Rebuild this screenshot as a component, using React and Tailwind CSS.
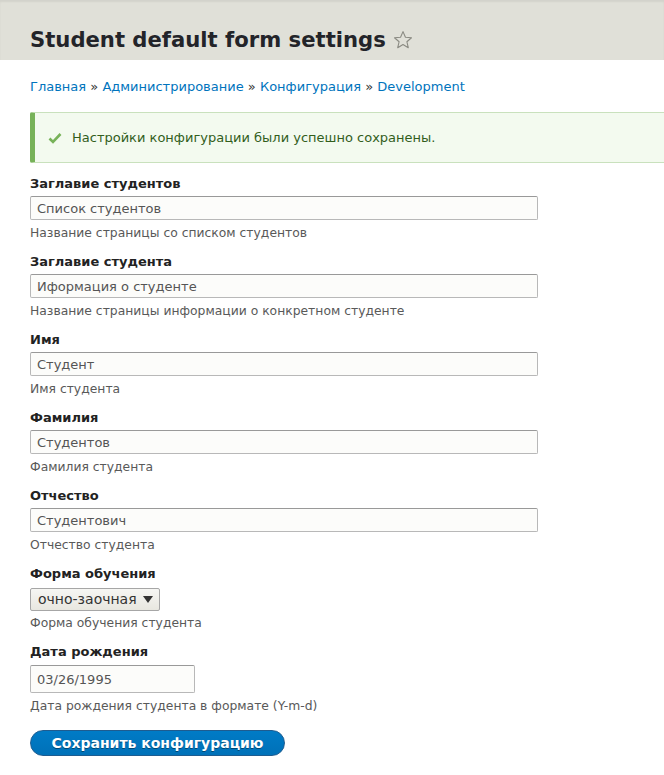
import React from "react";

const fields = [
  { label: "Заглавие студентов", value: "Список студентов", desc: "Название страницы со списком студентов" },
  { label: "Заглавие студента", value: "Иформация о студенте", desc: "Название страницы информации о конкретном студенте" },
  { label: "Имя", value: "Студент", desc: "Имя студента" },
  { label: "Фамилия", value: "Студентов", desc: "Фамилия студента" },
  { label: "Отчество", value: "Студентович", desc: "Отчество студента" },
];

const Star = () => (
  <svg width="20" height="20" viewBox="0 0 20 20" className="ml-[7px] shrink-0">
    <path
      d="M10 1.6l2.45 5.6 6.05.55-4.6 4 1.38 5.95L10 14.55 4.72 17.7 6.1 11.75l-4.6-4 6.05-.55z"
      fill="none"
      stroke="#8a8a82"
      strokeWidth="1.1"
      strokeLinejoin="round"
    />
  </svg>
);

const Check = () => (
  <svg width="14" height="12" viewBox="0 0 14 12" className="shrink-0">
    <path d="M1.5 6.5l3.5 3.5 7.5-8" fill="none" stroke="#77b259" strokeWidth="2.6" />
  </svg>
);

export default function App() {
  return (
    <div className="w-full min-h-[775px] bg-white overflow-hidden text-[#222] font-['DejaVu_Sans',sans-serif]">
      <div className="h-[60px] bg-[#e0e0d8] px-[30px] pt-[27px] shadow-[inset_0_2px_2px_rgba(0,0,0,0.06)]">
        <h1 className="flex items-center text-[21.15px] leading-[26px] font-bold text-[#232429]">
          <span>Student default form settings</span>
          <Star />
        </h1>
      </div>

      <div className="px-[30px]">
        <nav className="mt-[17px] text-[13px] leading-[20px] text-[#333]">
          <a className="text-[#0074bd]">Главная</a> » <a className="text-[#0074bd]">Администрирование</a> »{" "}
          <a className="text-[#0074bd]">Конфигурация</a> » <a className="text-[#0074bd]">Development</a>
        </nav>

        <div className="mt-[15px] mr-[-40px] h-[51px] flex items-center gap-[10px] pl-[13px] bg-[#f3faef] border border-[#c9e1bd] border-l-[5px] border-l-[#77b259] rounded-l-[2px] text-[13px] text-[#325e1c]">
          <Check />
          <span>Настройки конфигурации были успешно сохранены.</span>
        </div>

        <form className="mt-[12px]">
          {fields.map((f) => (
            <div key={f.label} className="mb-[11px]">
              <label className="block text-[13px] leading-[18px] font-bold text-[#222]">{f.label}</label>
              <input
                readOnly
                value={f.value}
                className="mt-[3px] block w-[508px] h-[24px] px-[6px] bg-[#fcfcfa] border border-[#b8b8b8] border-t-[#999] rounded-[2px] text-[13px] text-[#555] outline-none"
              />
              <div className="mt-[4px] text-[12.35px] leading-[18px] text-[#595959]">{f.desc}</div>
            </div>
          ))}

          <div className="mb-[11px]">
            <label className="block text-[13px] leading-[18px] font-bold text-[#222]">Форма обучения</label>
            <div className="mt-[5px] w-[130px] h-[23px] flex items-center justify-between pl-[7px] pr-[6px] rounded-[2px] border border-[#a6a6a6] bg-gradient-to-b from-[#f6f6f3] to-[#e8e7e0] text-[14px] text-[#333]">
              <span>очно-заочная</span>
              <svg width="10" height="7" viewBox="0 0 10 7">
                <path d="M0 0h10L5 7z" fill="#333" />
              </svg>
            </div>
            <div className="mt-[3px] text-[12.35px] leading-[18px] text-[#595959]">Форма обучения студента</div>
          </div>

          <div>
            <label className="block text-[13px] leading-[18px] font-bold text-[#222]">Дата рождения</label>
            <input
              readOnly
              value="03/26/1995"
              className="mt-[4px] block w-[165px] h-[28px] px-[6px] bg-[#fcfcfa] border border-[#b8b8b8] border-t-[#999] rounded-[2px] text-[13px] text-[#555] outline-none"
            />
            <div className="mt-[4px] text-[12.35px] leading-[18px] text-[#595959]">Дата рождения студента в формате (Y-m-d)</div>
          </div>

          <button
            type="button"
            className="mt-[15px] h-[26px] w-[255px] rounded-full border border-[#1e5c90] bg-gradient-to-b from-[#007bc6] to-[#0071b8] text-white text-[14px] font-bold [text-shadow:0_1px_rgba(0,0,0,0.4)]"
          >
            Сохранить конфигурацию
          </button>
        </form>
      </div>
    </div>
  );
}
